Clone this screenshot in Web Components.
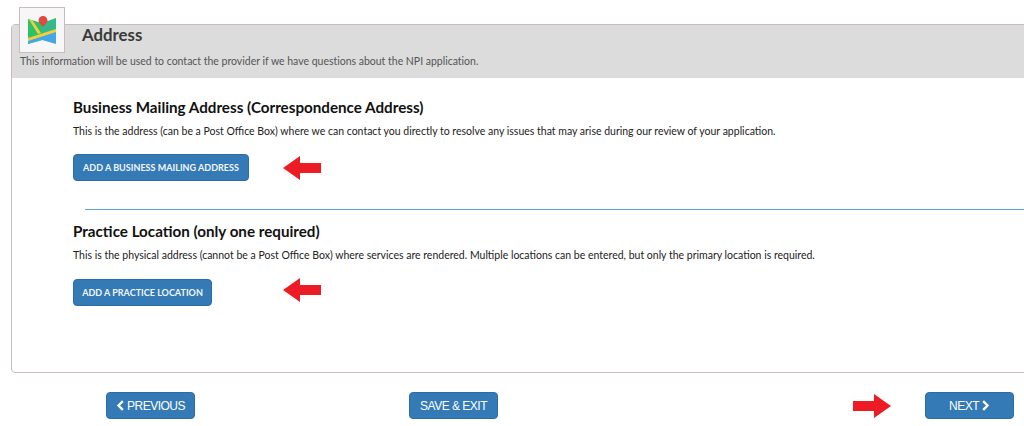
<!DOCTYPE html>
<html><head><meta charset="utf-8"><style>
html,body{margin:0;padding:0;background:#fff;overflow:hidden}
body{width:1024px;height:426px;font-family:"Lato","Noto Sans",sans-serif;color:#333}
</style></head><body>
<app-page></app-page>
<script>
class BaseEl extends HTMLElement{
  constructor(){super();this.attachShadow({mode:'open'}).innerHTML=this.constructor.html;}
}
class RedArrow extends BaseEl{
  static html=`<style>:host{display:block;width:38px;height:24px;line-height:0}svg{display:block}</style>
  <svg width="38" height="24" viewBox="0 0 38 24"><path d="M0 12 17 0V7H38V17H17V24Z" fill="#ed1c24"/></svg>`;
  connectedCallback(){if(this.hasAttribute('right'))this.shadowRoot.querySelector('svg').style.transform='scaleX(-1)';}
}
class ChevIcon extends BaseEl{
  static html=`<style>:host{display:inline-block;line-height:0}svg{display:block}</style>
  <svg width="8" height="11" viewBox="0 0 8 11"><path d="M6 .3 7.700 2 4 5.500 7.700 9 6 10.700 .8 5.500Z" fill="#fff"/></svg>`;
  connectedCallback(){if(this.hasAttribute('right'))this.shadowRoot.querySelector('svg').style.transform='scaleX(-1)';}
}
class BlueBtn extends BaseEl{
  static html=`<style>:host{display:inline-flex;align-items:center;justify-content:center;gap:3px;box-sizing:border-box;background:#337ab7;border:1px solid #2e6da4;border-radius:4px;color:#fff;height:26px;font:400 12px "Liberation Sans",sans-serif;letter-spacing:-.5px;white-space:nowrap}
  :host([small]){font:700 9px "Lato",sans-serif;letter-spacing:.02px;color:#f2f6fa}
  </style><slot></slot>`;
}
class MapIcon extends BaseEl{
  static html=`<style>:host{display:flex;align-items:flex-start;justify-content:center;box-sizing:border-box;width:46px;height:46px;padding-top:8px;background:#f7f7f7;border:1px solid #c8bcbc}</style>
  <svg width="28" height="29" viewBox="0 0 28 29">
   <path d="M0 3 14 7V24L0 28Z" fill="#2fc06a"/>
   <path d="M14 7 28 2V15L14 20Z" fill="#35b98a"/>
   <path d="M0 24 14 19 28 14V28L14 24 0 28Z" fill="#45a6e6"/>
   <path d="M0 22 28 13V16L0 25Z" fill="#f4cf3a"/>
   <path d="M1 3.500 4.500 4.500 13 17 10 18Z" fill="#f4cf3a"/>
   <path d="M15 0a4.500 4.500 0 0 1 4.500 4.500C19.500 7 16.500 9 15 11 13.500 9 10.500 7 10.500 4.500A4.500 4.500 0 0 1 15 0Z" fill="#dd4b3e"/>
  </svg>`;
}
class PanelHeader extends BaseEl{
  static html=`<style>:host{display:block;box-sizing:border-box;height:53px;background:#dcdcdc;padding:0 8px;position:relative}
  h2{margin:0;padding:0 0 0 62px;font:700 16.800px/20px "Lato",sans-serif;color:#3a3a3a}
  p{margin:0;padding-top:9px;font:400 10.500px/14px "Lato",sans-serif;letter-spacing:-.01px;color:#555}
  map-icon{position:absolute;left:7px;top:-18px}</style>
  <map-icon></map-icon><h2><slot name="title"></slot></h2><p><slot name="sub"></slot></p>`;
}
class AddrSection extends BaseEl{
  static html=`<style>:host{display:block}
  h3{margin:0;font:700 15.200px/20px "Lato",sans-serif;color:#111}
  p{margin:7px 0 0;font:400 10.500px/14px "Lato",sans-serif;color:#222}
  .row{display:flex;align-items:center;margin-top:var(--row,16px)}
  ::slotted(red-arrow){margin-left:var(--gap,34px);margin-top:var(--lift,0)}</style>
  <h3><slot name="title"></slot></h3><p><slot name="text"></slot></p><div class="row"><slot name="btn"></slot><slot name="arrow"></slot></div>`;
}
class AppPage extends BaseEl{
  static html=`<style>:host{display:block;padding-top:24px}
  .panel{box-sizing:border-box;margin-left:11px;width:1030px;height:349px;border:1px solid #c8bcbc;border-radius:4px 0 0 4px}
  .body{padding:19px 0 0 61px}
  hr{border:0;height:1px;background:#5aa5dc;margin:28px 0 11px 12px}
  .foot{display:grid;grid-template-columns:303px 444px 72px 89px;margin:19px 0 0 106px;align-items:center;width:918px}
  blue-btn{width:89px;height:27px}
  </style>
  <div class="panel">
    <panel-header><span slot="title">Address</span><span slot="sub">This information will be used to contact the provider if we have questions about the NPI application.</span></panel-header>
    <div class="body">
      <addr-section>
        <span slot="title">Business Mailing Address (Correspondence Address)</span>
        <span slot="text">This is the address (can be a Post Office Box) where we can contact you directly to resolve any issues that may arise during our review of your application.</span>
        <blue-btn small slot="btn" style="width:176px">ADD A BUSINESS MAILING ADDRESS</blue-btn>
        <red-arrow slot="arrow"></red-arrow>
      </addr-section>
      <hr>
      <addr-section style="--gap:71px;--row:17px;--lift:-6px">
        <span slot="title">Practice Location (only one required)</span>
        <span slot="text">This is the physical address (cannot be a Post Office Box) where services are rendered. Multiple locations can be entered, but only the primary location is required.</span>
        <blue-btn small slot="btn" style="width:139px">ADD A PRACTICE LOCATION</blue-btn>
        <red-arrow slot="arrow"></red-arrow>
      </addr-section>
    </div>
  </div>
  <div class="foot">
    <div><blue-btn><chev-icon></chev-icon>PREVIOUS</blue-btn></div>
    <div><blue-btn>SAVE &amp; EXIT</blue-btn></div>
    <div><red-arrow right></red-arrow></div>
    <div><blue-btn>NEXT<chev-icon right></chev-icon></blue-btn></div>
  </div>`;
}
customElements.define('red-arrow',RedArrow);
customElements.define('chev-icon',ChevIcon);
customElements.define('blue-btn',BlueBtn);
customElements.define('map-icon',MapIcon);
customElements.define('panel-header',PanelHeader);
customElements.define('addr-section',AddrSection);
customElements.define('app-page',AppPage);
</script>
</body></html>
